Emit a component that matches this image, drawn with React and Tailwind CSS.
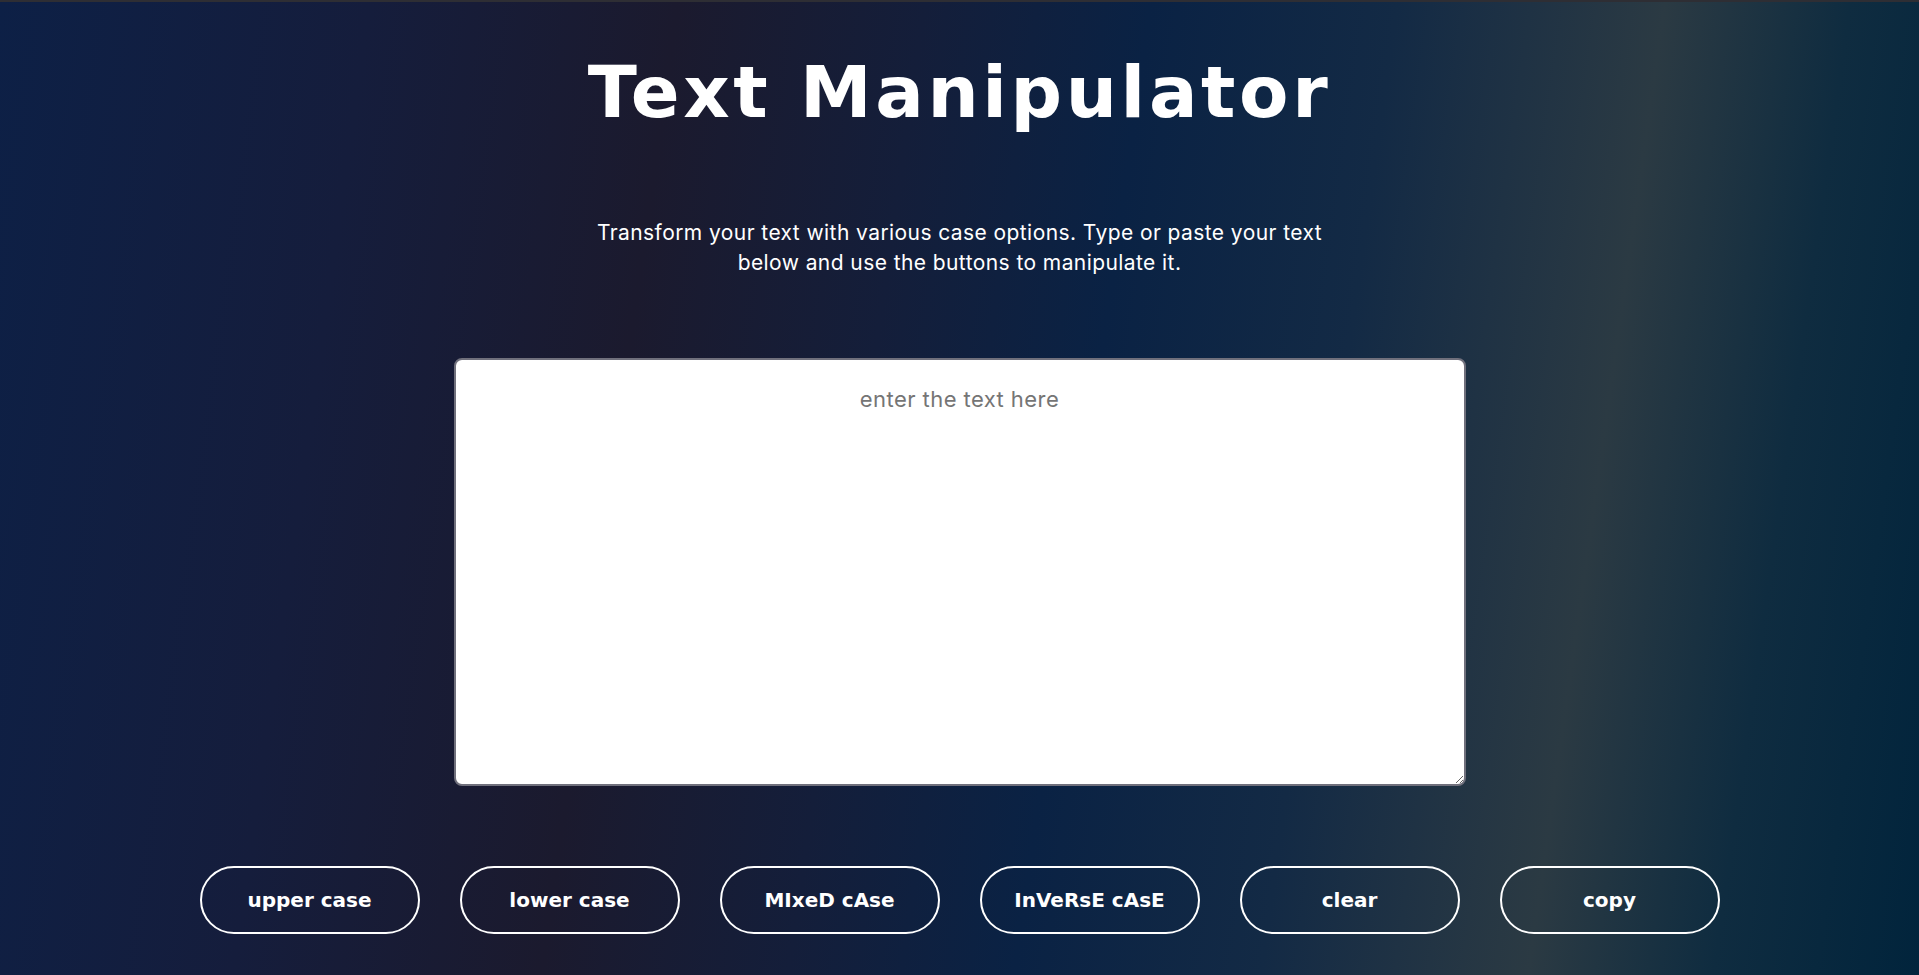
import React, { useState } from "react";

const buttons = ["upper case", "lower case", "MIxeD cAse", "InVeRsE cAsE", "clear", "copy"];

export default function App() {
  const [text, setText] = useState("");
  return (
    <div className="min-h-[975px] w-full flex flex-col bg-[linear-gradient(98deg,#0d2046_0%,#151d3c_18%,#1b1a2e_33%,#141e3a_45%,#0a2244_56%,#132a45_68%,#2b3a43_81%,#0f2c40_90%,#01243c_100%)]">
      <div className="h-[2px] w-full bg-[#2e2e34]" />
      <h1 className="mt-[54px] text-center text-white text-[72px] leading-[72px] font-bold tracking-[0.05em] font-['DejaVu_Sans',sans-serif]">
        Text Manipulator
      </h1>
      <p className="mt-[90px] mx-auto w-[740px] text-center text-white text-[21px] leading-[30px] tracking-[0.02em] font-['Inter',sans-serif]">
        Transform your text with various case options. Type or paste your text below and use the buttons to manipulate it.
      </p>
      <div className="mt-[80px] flex justify-center">
        <textarea
          value={text}
          onChange={(e) => setText(e.target.value)}
          placeholder="enter the text here"
          className="w-[1012px] h-[428px] bg-white rounded-[8px] border-2 border-[#70707c] px-6 pt-[24px] text-center text-[22px] leading-[30px] tracking-[0.02em] text-[#333] placeholder:text-[#757575] font-['Inter',sans-serif] outline-none"
        />
      </div>
      <div className="mt-[80px] flex justify-center gap-[40px]">
        {buttons.map((b) => (
          <button
            key={b}
            className="w-[220px] h-[68px] rounded-full border-2 border-white bg-transparent text-white text-[20px] font-bold font-['DejaVu_Sans',sans-serif]"
          >
            {b}
          </button>
        ))}
      </div>
    </div>
  );
}
